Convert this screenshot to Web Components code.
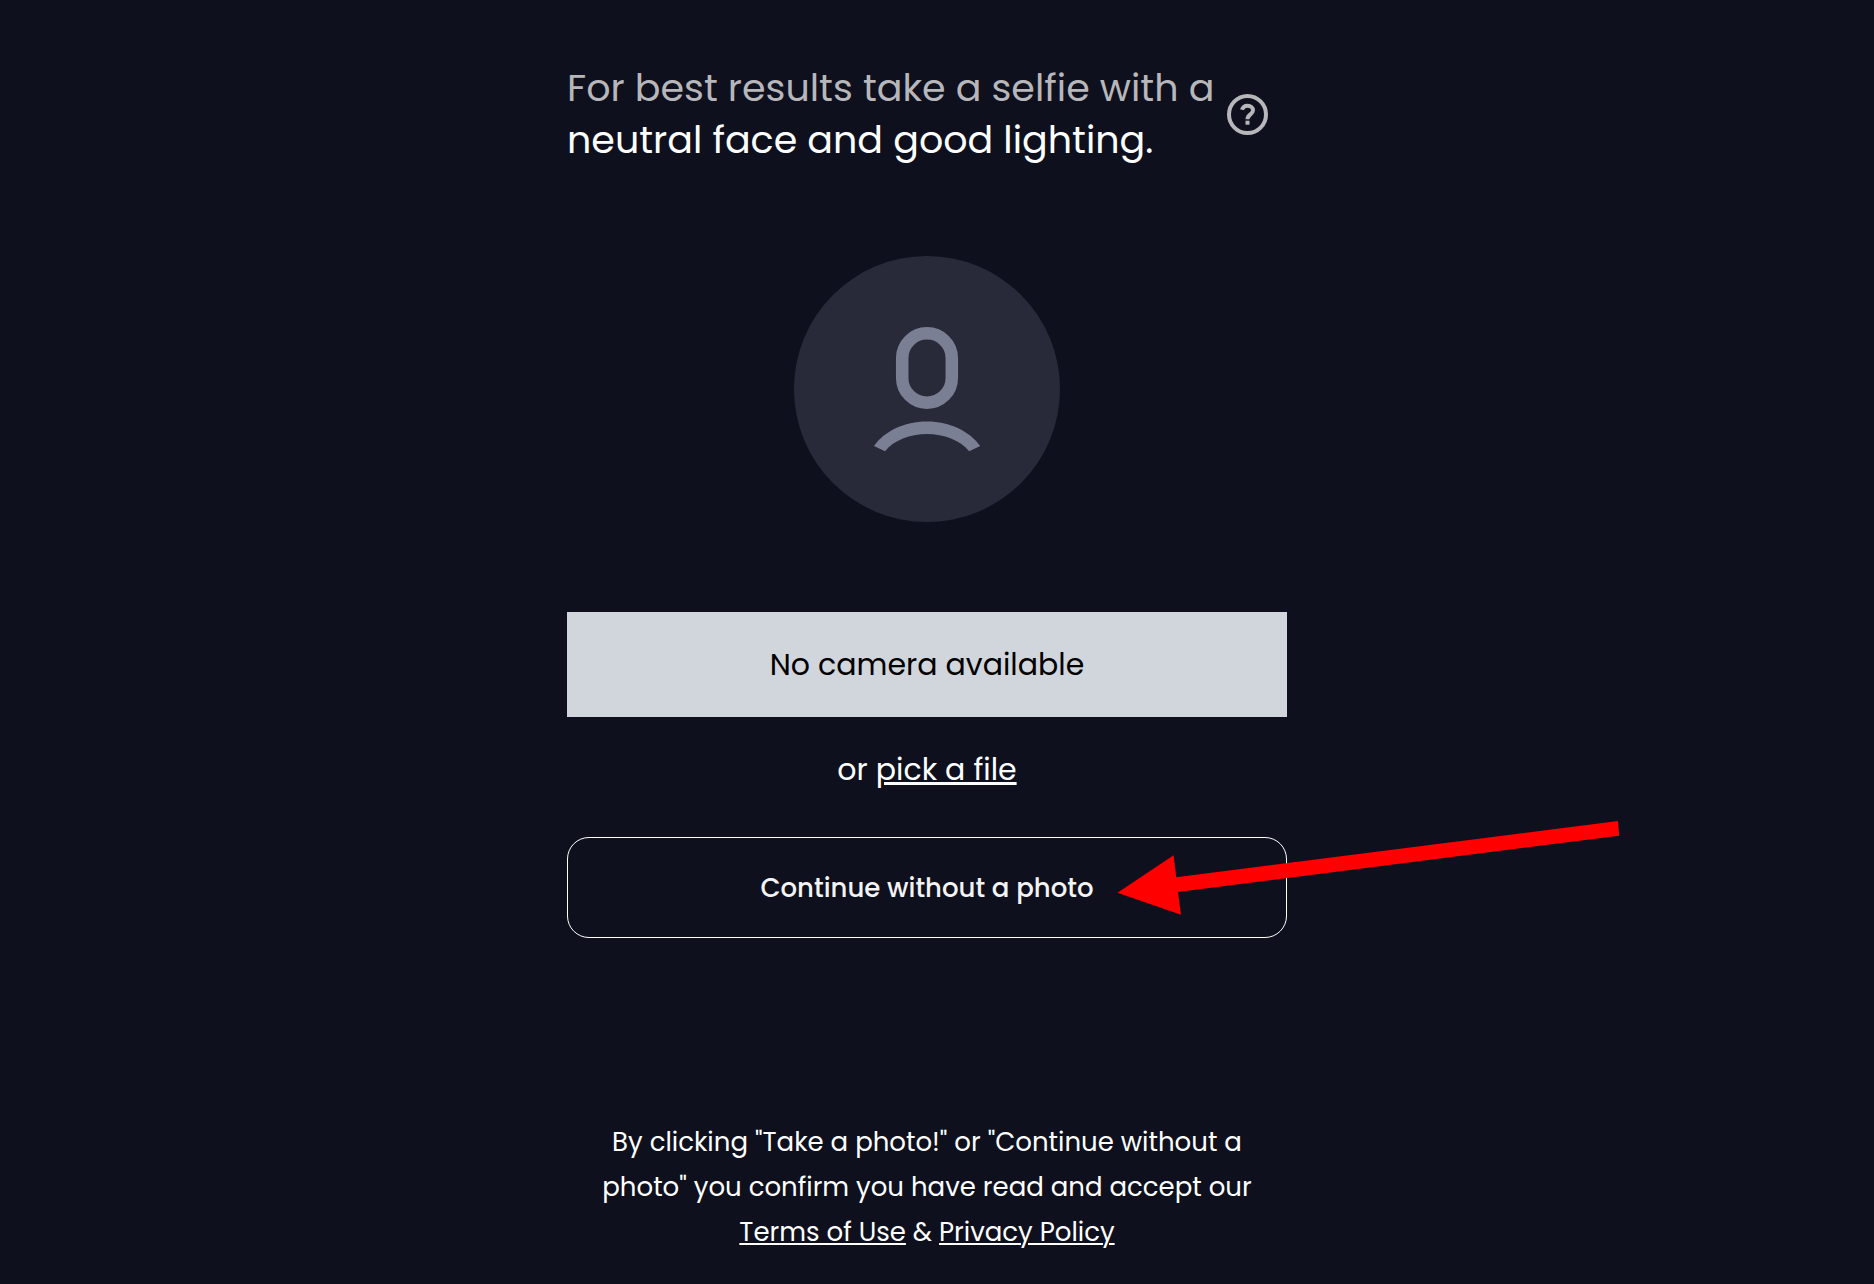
<!DOCTYPE html>
<html lang="en">
<head>
<meta charset="utf-8">
<meta name="viewport" content="width=device-width, initial-scale=1">
<title>Take a selfie</title>
<style>
  html { background: #0e101d; }
  body { margin: 0; color: #fff; font-family: Poppins, Inter, "Open Sans", sans-serif; }
</style>
</head>
<body>
<selfie-page>
  <selfie-tip slot="tip"></selfie-tip>
  <avatar-placeholder></avatar-placeholder>
  <camera-actions></camera-actions>
  <legal-note slot="legal"></legal-note>
</selfie-page>
<script>
function define(name, html) {
  const template = document.createElement('template');
  template.innerHTML = html;
  customElements.define(name, class extends HTMLElement {
    constructor() {
      super();
      this.attachShadow({ mode: 'open' }).append(template.content.cloneNode(true));
    }
  });
}

define('selfie-page', `
  <style>
    :host { display: block; padding: 62px 20px 16px 0; overflow: hidden; }
    main { display: flex; flex-direction: column; max-width: 720px; margin: 0 auto; }
    .body { display: flex; flex-direction: column; gap: 90px; padding: 90px 0 182px; }
  </style>
  <main>
    <slot name="tip"></slot>
    <div class="body"><slot></slot></div>
    <slot name="legal"></slot>
  </main>`);

define('selfie-tip', `
  <style>
    :host { display: flex; align-items: center; gap: 13px; }
    p { margin: 0; font-size: 38px; line-height: 52px; white-space: nowrap; }
    .soft { color: #b7b7bb; }
    button { display: flex; padding: 0; border: 0; background: none; color: #b7b7bb; cursor: pointer; }
    svg { display: block; width: 41px; height: 41px; }
  </style>
  <p><span class="soft">For best results take a selfie with a</span><br>neutral face and good lighting.</p>
  <button type="button" aria-label="Selfie tips">
    <svg viewBox="0 0 41 41" fill="none" stroke="currentColor" stroke-width="4" aria-hidden="true">
      <circle cx="20.5" cy="20.5" r="18.5"/>
      <path d="M15 15.8c.7-2.6 2.8-4.1 5.6-4.1 3.1 0 5.4 1.9 5.4 4.6 0 4.2-5.5 4-5.5 8.9"/>
      <path d="M18.5 28.7h4" />
    </svg>
  </button>`);

define('avatar-placeholder', `
  <style>
    :host { display: flex; justify-content: center; }
    svg { display: block; width: 266px; height: 266px; }
  </style>
  <svg viewBox="0 0 266 266" fill="none" role="img" aria-label="No photo yet">
    <circle cx="133" cy="133" r="133" fill="#292a39"/>
    <g stroke="#7b7f93" stroke-width="12.5">
      <rect x="108.2" y="77.3" width="49.6" height="69.4" rx="24.8"/>
    </g>
    <path fill="#7b7f93" d="M80 190C90 175.400 110 165.400 133 165.400s43 10 53.200 24.600l-11 5.200C166 184.400 150 178.100 133 178.100S100 184.400 91 195.200z"/>
  </svg>`);

define('camera-actions', `
  <style>
    :host { display: flex; flex-direction: column; }
    button { width: 100%; box-sizing: border-box; margin: 0; font-family: inherit; }
    .camera { padding: 30px; border: 0; background: #d1d5dc; color: #000; font-size: 30px; line-height: 45px; }
    p { margin: 0; padding: 30px 0 45px; text-align: center; font-size: 30px; line-height: 45px; }
    a { color: inherit; text-decoration-thickness: 3px; text-underline-offset: 2px; }
    .skip { position: relative; }
    .skip button { display: block; padding: 29px 28px 27px; border: 1px solid #fff; border-radius: 22px; background: none; color: #f3f3f4;
      font-size: 26px; font-weight: 500; line-height: 43px; cursor: pointer; }
    .arrow { position: absolute; left: 550px; top: -17px; width: 503px; height: 96px; pointer-events: none; }
  </style>
  <button class="camera" type="button" disabled>No camera available</button>
  <p>or <a href="#file">pick a file</a></p>
  <div class="skip">
    <button type="button">Continue without a photo</button>
    <svg class="arrow" viewBox="0 0 503 96" aria-hidden="true">
      <path fill="#f00" d="M.5 72.7 56.600 35.300 59.300 57.300 501 1 502.200 15.700 61 72 64 94.700z"/>
    </svg>
  </div>`);

define('legal-note', `
  <style>
    :host { display: block; text-align: center; font-size: 26px; line-height: 45px; }
    p { margin: 0; white-space: nowrap; }
    a { color: inherit; text-decoration-thickness: 2px; text-underline-offset: 2px; }
  </style>
  <p>By clicking "Take a photo!" or "Continue without a<br>photo" you confirm you have read and accept our<br><a href="#terms">Terms of Use</a> &amp; <a href="#privacy">Privacy Policy</a></p>`);
</script>
</body>
</html>
